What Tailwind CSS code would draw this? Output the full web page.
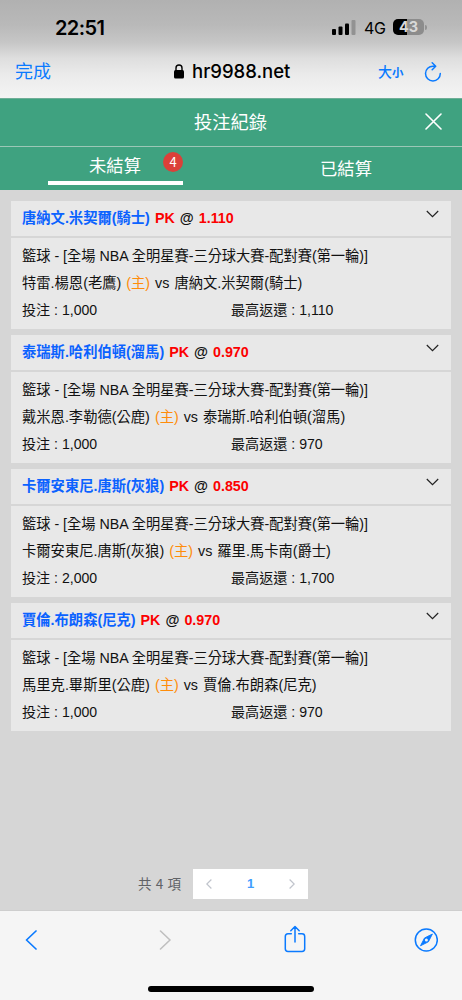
<!DOCTYPE html>
<html lang="zh-Hant">
<head>
<meta charset="utf-8">
<title>投注紀錄</title>
<script src="https://cdn.jsdelivr.net/npm/@tailwindcss/browser@4"></script>
</head>
<body class="w-[462px] h-[1000px] overflow-hidden flex flex-col bg-[#d6d6d6] font-['Liberation_Sans','Noto_Sans_CJK_TC',sans-serif] text-[#111]">
<header class="h-[98px] shrink-0 flex flex-col bg-[linear-gradient(#b1b1b1_0px,#b9b9b9_25px,#c6c6c6_42px,#dedede_58px,#ebebeb_75px,#f4f4f4_98px)] font-['Inter','Noto_Sans_CJK_TC',sans-serif] text-black">
  <div class="h-[54px] pt-px flex items-center justify-between pl-[55px] pr-[35px]">
    <span class="text-[20px] leading-6 font-semibold tracking-[-0.6px]">22:51</span>
    <div class="flex items-center">
      <svg class="w-6 h-[15px] -mt-px" viewBox="0 0 24 15"><rect x="0" y="9" width="4" height="6" rx="1"/><rect x="6.5" y="6.5" width="4" height="8.5" rx="1"/><rect x="13" y="3.5" width="4" height="11.5" rx="1"/><rect x="19.5" y="0" width="4" height="15" rx="1" fill="#929292"/></svg>
      <span class="ml-[8px] text-[16px] w-[21px] tracking-[-0.3px]">4G</span>
      <div class="ml-[8px] -mt-[2px] w-[31px] h-4 rounded-[5px] bg-linear-to-r from-black from-44% to-[#8c8c8c] to-44% text-center text-[14.5px] leading-4 font-bold text-[#d8d8d8]">43</div>
      <div class="ml-px w-[2px] h-[5px] rounded-r-full bg-[#929292]"></div>
    </div>
  </div>
  <div class="h-[36px] flex items-center text-[#0a7aff] pl-[15px]">
    <span class="w-[158px] text-[18px] -mt-px">完成</span>
    <svg class="w-[12px] h-[15px] -mt-[2px]" viewBox="0 0 12 15" fill="#000"><rect x="1" y="6" width="10" height="8.5" rx="1.5"/><path d="M3 7V4a3 3 0 0 1 6 0v3" fill="none" stroke="#000" stroke-width="1.4"/></svg>
    <span class="ml-[7px] w-[186px] text-[18.5px] font-medium text-black">hr9988.net</span>
    <span class="w-[46px] text-[14px] font-medium whitespace-nowrap">大<span class="text-[11.5px] font-bold">小</span></span>
    <svg class="w-[18px] h-[20px] -mt-px" viewBox="0 0 18 20" fill="none" stroke="#0a7aff" stroke-width="1.5" stroke-linecap="round" stroke-linejoin="round"><path d="M16.3 11.5A7.4 7.4 0 1 1 9 4.200h2.500M8.200.8l3.500 3.400-3.500 3.500"/></svg>
  </div>
</header>

<div class="h-[48px] shrink-0 border-t border-[#6fae97] bg-[#3fa280] text-white flex items-center justify-center pl-[184px] pr-5">
  <h1 class="flex-1 text-[18.3px] pl-[10px]">投注紀錄</h1>
  <svg class="w-[17px] h-[17px] -mt-[2px]" viewBox="0 0 17 17" stroke="#fff" stroke-width="1.6" stroke-linecap="round"><path d="M1 1l15 15M16 1L1 16"/></svg>
</div>
<nav class="h-[44px] shrink-0 border-t border-[#9cc7b7] bg-[#3fa280] text-white text-[17.3px] flex">
  <div class="w-1/2 flex justify-center">
    <div class="relative w-[135px] h-[38px] border-b-[4px] border-white text-center leading-[38px] pr-px">未結算<span class="absolute right-0 top-[5px] size-5 rounded-full bg-[#db4039] text-[13px] leading-5 font-['Noto_Sans_CJK_TC']">4</span></div>
  </div>
  <div class="w-1/2 text-center leading-[44px] pr-px">已結算</div>
</nav>

<main id="bets" class="pt-[11px] px-[11px] flex flex-col gap-[6px]"></main>
<template id="card">
  <article class="h-[128px] bg-[#e8e8e8] text-[14.3px]">
    <div class="h-[37px] border-b-2 border-[#d6d6d6] pl-[11px] pr-[12px] flex justify-between font-bold leading-[35px] whitespace-nowrap">
      <div class="flex gap-[5px]"><span data-f="pick" class="text-[#0b62ff]"></span><span class="text-[#fc0000]">PK</span><span class="text-[#111]">@</span><span data-f="odds" class="text-[#fc0000]"></span></div>
      <svg class="w-[13px] h-[8px] mt-[9px]" viewBox="0 0 13 8" fill="none" stroke="#222" stroke-width="1.2"><path d="M.8 1l5.7 5.6L12.2 1"/></svg>
    </div>
    <div class="pt-[5px] pl-[11px] leading-[27px] whitespace-nowrap">
      <p class="text-[14.23px]">籃球 - [全場 NBA 全明星賽-三分球大賽-配對賽(第一輪)]</p>
      <p class="flex gap-[5px]"><span data-f="home"></span><span class="text-[#ff8c0a]">(主)</span><span>vs</span><span data-f="away"></span></p>
      <p class="flex text-[14.1px]"><span class="w-[209px]">投注 : <span data-f="stake"></span></span><span>最高返還 : <span data-f="ret"></span></span></p>
    </div>
  </article>
</template>
<footer class="mt-auto h-[180px] shrink-0 flex flex-col">
  <div class="h-[90px] flex items-center pl-[138px] pt-[38px] text-[#606266] font-['Noto_Sans_CJK_TC']">
    <span class="w-[55px] text-[13.5px] tracking-[.6px] whitespace-nowrap -mt-px">共 4 項</span>
    <div class="w-[115px] h-[30px] bg-white flex items-center justify-between px-[13px]">
      <svg class="w-[6px] h-[10px]" viewBox="0 0 6 10" fill="none" stroke="#c0c4cc" stroke-width="1.2"><path d="M5.4.5L.8 5l4.6 4.5"/></svg>
      <span class="text-[13px] font-bold text-[#409eff] font-['Liberation_Sans']">1</span>
      <svg class="w-[6px] h-[10px]" viewBox="0 0 6 10" fill="none" stroke="#c0c4cc" stroke-width="1.2"><path d="M.6.5L5.2 5 .6 9.5"/></svg>
    </div>
  </div>
  <div class="h-[90px] border-t border-[#cecece] bg-[#f5f5f5] flex flex-col">
    <div class="h-[57px] flex items-center pl-[25px]">
      <svg class="w-[12px] h-[20px]" viewBox="0 0 12 20" fill="none" stroke="#0a7aff" stroke-width="1.7" stroke-linecap="round" stroke-linejoin="round"><path d="M11 1L1.500 10l9.500 9"/></svg>
      <svg class="w-[12px] h-[20px] ml-[122px]" viewBox="0 0 12 20" fill="none" stroke="#bfbfbf" stroke-width="1.6" stroke-linecap="round" stroke-linejoin="round"><path d="M1.500 1l9.500 9-9.500 9"/></svg>
      <svg class="w-[22px] h-[28px] ml-[113px] -mt-[2px]" viewBox="0 0 22 28" fill="none" stroke="#0a7aff" stroke-width="1.5" stroke-linecap="round" stroke-linejoin="round"><path d="M7.300 8.800H4Q1.300 8.800 1.300 11.500v12.200Q1.300 26.400 4 26.400h14q2.700 0 2.700-2.700V11.500q0-2.700-2.700-2.700h-3.300M11 17V1.800M6.800 5.700L11 1.500l4.200 4.200"/></svg>
      <svg class="size-6 ml-[108px]" viewBox="0 0 24 24" fill="none" stroke="#0a7aff"><circle cx="12.300" cy="12" r="11" stroke-width="1.500"/><path d="M18.400 6l-4 7.800-7.900 4 4-7.800z" fill="#0a7aff" stroke-width=".9" stroke-linejoin="round"/><circle cx="12.400" cy="11.900" r="1.500" fill="#f5f5f5" stroke="none"/></svg>
    </div>
    <div class="ml-[148px] mt-[18px] w-[166px] h-[6px] rounded-full bg-black"></div>
  </div>
</footer>
<script>
const bets = [
  {pick:'唐納文.米契爾(騎士)', odds:'1.110', home:'特雷.楊恩(老鷹)', away:'唐納文.米契爾(騎士)', stake:'1,000', ret:'1,110'},
  {pick:'泰瑞斯.哈利伯頓(溜馬)', odds:'0.970', home:'戴米恩.李勒德(公鹿)', away:'泰瑞斯.哈利伯頓(溜馬)', stake:'1,000', ret:'970'},
  {pick:'卡爾安東尼.唐斯(灰狼)', odds:'0.850', home:'卡爾安東尼.唐斯(灰狼)', away:'羅里.馬卡南(爵士)', stake:'2,000', ret:'1,700'},
  {pick:'賈倫.布朗森(尼克)', odds:'0.970', home:'馬里克.畢斯里(公鹿)', away:'賈倫.布朗森(尼克)', stake:'1,000', ret:'970'}
];
const list = document.getElementById('bets'), tpl = document.getElementById('card');
for (const bet of bets) {
  const card = tpl.content.cloneNode(true);
  card.querySelectorAll('[data-f]').forEach(el => el.textContent = bet[el.dataset.f]);
  list.append(card);
}
</script>
</body>
</html>
